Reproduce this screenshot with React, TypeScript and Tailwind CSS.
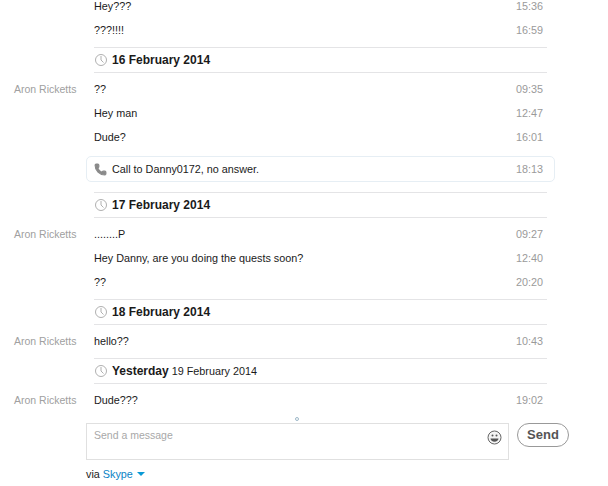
import { Phone } from "lucide-react";

function Msg({ name, text, time }: { name?: string; text: string; time: string }) {
  return (
    <div className="flex h-6 items-center leading-[12px]">
      <div className="w-[94px] shrink-0 pl-[14px] text-[10.5px] text-[#a0a0a0]">{name}</div>
      <div className="flex-1 text-[#1a1a1a]">{text}</div>
      <div className="w-[40px] pr-[4px] text-right text-[#9a9a9a]">{time}</div>
    </div>
  );
}

function DateLine({ bold, rest }: { bold: string; rest?: string }) {
  return (
    <div className="ml-[94px] flex h-[26px] items-center gap-[5px] border-y border-[#e4e4e6] text-[#1a1a1a]">
      <svg width="12" height="12" viewBox="0 0 12 12" fill="none" stroke="#b0b0b0" strokeWidth="1" className="ml-[1px]">
        <circle cx="6" cy="6" r="5.5" />
        <path d="M6 2v4l2.5 2.5" />
      </svg>
      <span>
        <b className="text-[12px]">{bold}</b>
        {rest ? " " + rest : ""}
      </span>
    </div>
  );
}

export default function App() {
  return (
    <div className="h-[486px] w-[608px] overflow-hidden bg-white font-['Liberation_Sans',sans-serif] text-[10.8px]">
      <div className="-mt-[6px] w-[547px]">
        <Msg text="Hey???" time="15:36" />
        <Msg text="???!!!!" time="16:59" />
        <div className="mt-[5px]" />
        <DateLine bold="16 February 2014" />
        <div className="mt-[4px]" />
        <Msg name="Aron Ricketts" text="??" time="09:35" />
        <Msg text="Hey man" time="12:47" />
        <Msg text="Dude?" time="16:01" />
        <div className="mt-[7px] ml-[86px] -mr-[8px] flex h-[26px] items-center rounded-[5px] border border-[#e6eef4] pl-[7px] pr-[11px]">
          <Phone size={13} fill="#8a8a8a" stroke="#8a8a8a" className="mr-[5px]" />
          <span className="flex-1 pt-px text-[#1a1a1a]">Call to Danny0172, no answer.</span>
          <span className="pt-px text-[#9a9a9a]">18:13</span>
        </div>
        <div className="mt-[10px]" />
        <DateLine bold="17 February 2014" />
        <div className="mt-[4px]" />
        <Msg name="Aron Ricketts" text="........P" time="09:27" />
        <Msg text="Hey Danny, are you doing the quests soon?" time="12:40" />
        <Msg text="??" time="20:20" />
        <div className="mt-[5px]" />
        <DateLine bold="18 February 2014" />
        <div className="mt-[4px]" />
        <Msg name="Aron Ricketts" text="hello??" time="10:43" />
        <div className="mt-[5px]" />
        <DateLine bold="Yesterday" rest="19 February 2014" />
        <div className="mt-[4px]" />
        <Msg name="Aron Ricketts" text="Dude???" time="19:02" />
      </div>
      <div className="ml-[295px] mt-[5px] h-[4px] w-[4px] rounded-full border border-[#9db8c8]" />
      <div className="ml-[86px] mt-[2px] flex items-start gap-[8px]">
        <div className="flex h-[37px] w-[423px] justify-between border border-[#e0e0e0] pl-[7px] pr-[6px] pt-[4px] text-[10.5px] text-[#a8a8a8]">
          <span>Send a message</span>
          <svg width="15" height="15" viewBox="0 0 15 15" className="mt-[2px]">
            <circle cx="7.5" cy="7.5" r="6.5" fill="#f4f4f4" stroke="#666" strokeWidth="1" />
            <circle cx="5.5" cy="5.5" r="1" fill="#555" />
            <circle cx="9.5" cy="5.5" r="1" fill="#555" />
            <path d="M3.5 8.5h8c0 2-1.8 3.2-4 3.2s-4-1.2-4-3.2z" fill="#555" />
          </svg>
        </div>
        <button className="flex h-[24px] w-[52px] items-center justify-center rounded-full border border-[#999] text-[13px] font-bold text-[#555]">
          Send
        </button>
      </div>
      <div className="ml-[86px] mt-[6px] flex items-center gap-[4px] text-[#1a1a1a]">
        <span>
          via <span className="text-[#0a84c6]">Skype</span>
        </span>
        <span className="h-0 w-0 border-x-[4px] border-t-[4px] border-x-transparent border-t-[#0a9ad6]" />
      </div>
    </div>
  );
}
